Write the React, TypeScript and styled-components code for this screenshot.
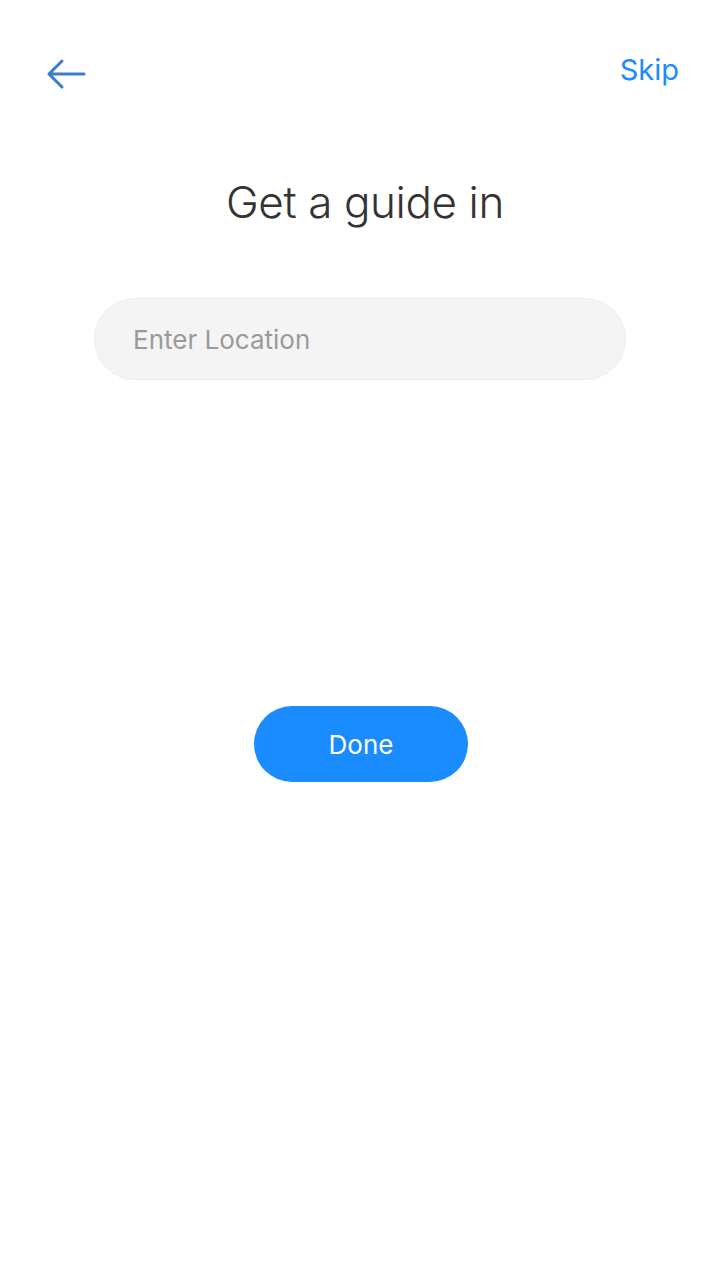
import React from "react";
import styled, { createGlobalStyle } from "styled-components";

const Global = createGlobalStyle`
  html, body { margin: 0; padding: 0; background: #ffffff; }
  body { font-family: Inter, "Noto Sans", sans-serif; }
  * { box-sizing: border-box; }
`;

const Screen = styled.div`
  width: 720px;
  height: 1280px;
  background: #ffffff;
  display: flex;
  flex-direction: column;
  align-items: center;
`;

const TopBar = styled.div`
  width: 100%;
  height: 146px;
  display: flex;
  justify-content: space-between;
  align-items: flex-start;
  padding: 52px 41px 0 46px;
`;

const BackButton = styled.button`
  border: none;
  background: none;
  padding: 0;
  margin-top: 6px;
  width: 42px;
  height: 32px;
  display: flex;
  align-items: center;
  cursor: pointer;
`;

const SkipLink = styled.button`
  border: none;
  background: none;
  padding: 0;
  font-family: Inter, sans-serif;
  font-size: 29px;
  font-weight: 400;
  color: #1a8cff;
  line-height: 36px;
  cursor: pointer;
`;

const Title = styled.h1`
  margin: 26px 0 0 10px;
  font-family: Inter, sans-serif;
  font-weight: 300;
  font-size: 44px;
  line-height: 60px;
  color: #333333;
  letter-spacing: -0.4px;
`;

const LocationInput = styled.input`
  margin-top: 66px;
  width: 532px;
  height: 82px;
  border-radius: 41px;
  border: 1px solid #ececec;
  background: #f4f4f4;
  padding: 0 38px;
  font-family: Inter, sans-serif;
  font-size: 26px;
  color: #333;
  outline: none;
  &::placeholder { color: #9a9a9a; }
`;

const DoneButton = styled.button`
  margin-top: 326px;
  margin-left: 2px;
  width: 214px;
  height: 76px;
  border-radius: 38px;
  border: none;
  background: #1a8cff;
  color: #ffffff;
  font-family: Inter, sans-serif;
  font-size: 26px;
  font-weight: 400;
  cursor: pointer;
`;

export default function App() {
  return (
    <>
      <Global />
      <Screen>
        <TopBar>
          <BackButton aria-label="Back">
            <svg width="42" height="32" viewBox="0 0 42 32">
              <path
                d="M38 16 H3 M16 3 L3 16 L16 29"
                fill="none"
                stroke="#3d7cc9"
                strokeWidth="3"
                strokeLinecap="round"
                strokeLinejoin="round"
              />
            </svg>
          </BackButton>
          <SkipLink>Skip</SkipLink>
        </TopBar>
        <Title>Get a guide in</Title>
        <LocationInput placeholder="Enter Location" />
        <DoneButton>Done</DoneButton>
      </Screen>
    </>
  );
}
